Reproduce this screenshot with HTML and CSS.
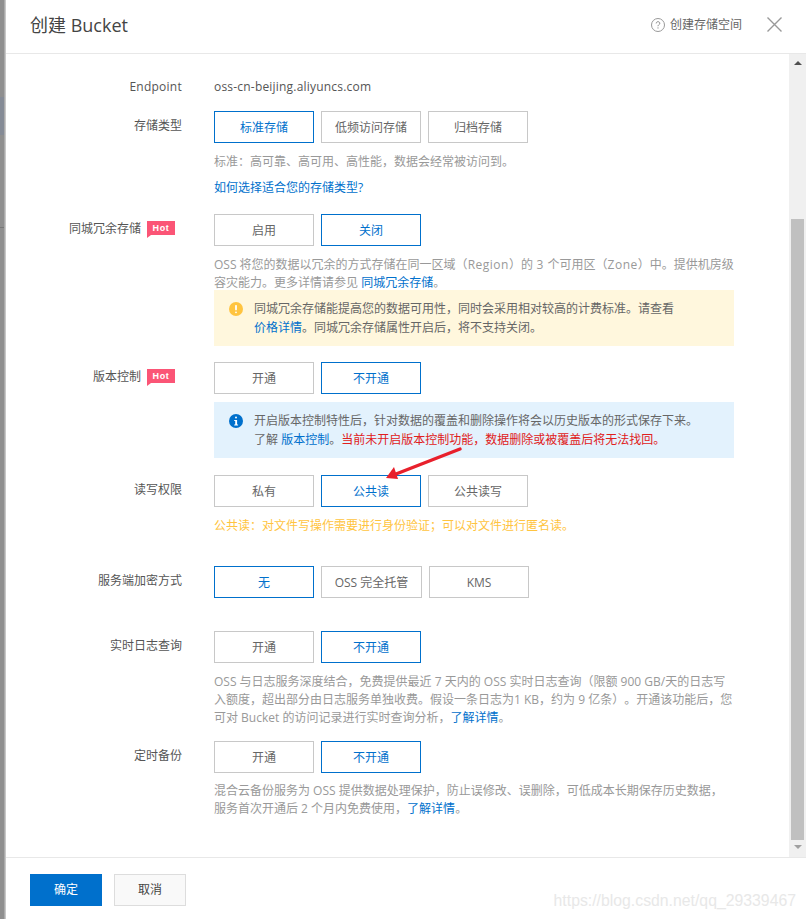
FILE: index.html
```html
<!DOCTYPE html>
<html lang="zh">
<head>
<meta charset="utf-8">
<title>创建 Bucket</title>
<link rel="stylesheet" href="styles.css">
</head>
<body>
<div class="strip"></div>
<div class="dialog">
  <header class="head">
    <h1 class="title">创建 Bucket</h1>
    <a class="help">
      <svg class="help-icon" width="14" height="14" viewBox="0 0 14 14"><circle cx="7" cy="7" r="6.5" fill="none" stroke="#999"/><path d="M5.2 5.4c0-1 .8-1.7 1.8-1.7s1.8.7 1.8 1.6c0 1.3-1.8 1.4-1.8 2.9" fill="none" stroke="#888"/><rect x="6.5" y="9.4" width="1" height="1.1" fill="#888"/></svg>
      创建存储空间
    </a>
    <svg class="close" width="15" height="15" viewBox="0 0 15 15"><path d="M.5.5l14 14M14.5.5l-14 14" stroke="#999" stroke-width="1.4" fill="none"/></svg>
  </header>
  <div class="middle">
    <main class="form">
      <div class="row row-endpoint">
        <div class="label label-flat">Endpoint</div>
        <div class="value">oss-cn-beijing.aliyuncs.com</div>
      </div>
      <div class="row gap-15">
        <div class="label">存储类型</div>
        <div>
          <div class="tabs"><span class="tab on">标准存储</span><span class="tab">低频访问存储</span><span class="tab">归档存储</span></div>
          <p class="hint mt-10">标准：高可靠、高可用、高性能，数据会经常被访问到。</p>
          <p class="hint mt-8"><a class="link">如何选择适合您的存储类型?</a></p>
        </div>
      </div>
      <div class="row gap-17">
        <div class="label label-hot">同城冗余存储<span class="hot">Hot</span></div>
        <div>
          <div class="tabs"><span class="tab">启用</span><span class="tab on">关闭</span></div>
          <p class="hint mt-10">OSS 将您的数据以冗余的方式存储在同一区域（<span class="latin">Region</span>）的<span class="latin"> 3 </span>个可用区（<span class="latin">Zone</span>）中。提供机房级容灾能力。更多详情请参见 <a class="link">同城冗余存储</a>。</p>
          <div class="notice warn">
            <svg class="notice-icon" width="14" height="14" viewBox="0 0 14 14"><circle cx="7" cy="7" r="7" fill="#ffc440"/><rect x="6.1" y="3" width="1.8" height="5.4" rx=".8" fill="#fff"/><rect x="6.1" y="9.4" width="1.8" height="1.8" rx=".9" fill="#fff"/></svg>
            <div>同城冗余存储能提高您的数据可用性，同时会采用相对较高的计费标准。请查看<br><a class="link">价格详情</a>。同城冗余存储属性开启后，将不支持关闭。</div>
          </div>
        </div>
      </div>
      <div class="row gap-16">
        <div class="label label-hot">版本控制<span class="hot">Hot</span></div>
        <div>
          <div class="tabs"><span class="tab">开通</span><span class="tab on">不开通</span></div>
          <div class="notice info">
            <svg class="notice-icon" width="14" height="14" viewBox="0 0 14 14"><circle cx="7" cy="7" r="7" fill="#0070cc"/><rect x="6" y="2.6" width="2" height="2" rx="1" fill="#fff"/><path d="M5.2 6h2.9v4.4h1v1H5.2v-1h1V7h-1z" fill="#fff"/></svg>
            <div>开启版本控制特性后，针对数据的覆盖和删除操作将会以历史版本的形式保存下来。<br>了解 <a class="link">版本控制</a>。<span class="danger">当前未开启版本控制功能，数据删除或被覆盖后将无法找回。</span></div>
          </div>
        </div>
      </div>
      <div class="row gap-17">
        <div class="label">读写权限</div>
        <div>
          <div class="tabs"><span class="tab">私有</span><span class="tab on">公共读</span><span class="tab">公共读写</span></div>
          <p class="hint hint-warn mt-10">公共读：对文件写操作需要进行身份验证；可以对文件进行匿名读。</p>
        </div>
      </div>
      <div class="row gap-31">
        <div class="label">服务端加密方式</div>
        <div class="tabs"><span class="tab on">无</span><span class="tab tab-wide">OSS 完全托管</span><span class="tab">KMS</span></div>
      </div>
      <div class="row gap-33">
        <div class="label">实时日志查询</div>
        <div>
          <div class="tabs"><span class="tab">开通</span><span class="tab on">不开通</span></div>
          <p class="hint mt-10">OSS 与日志服务深度结合，免费提供最近 7 天内的 OSS 实时日志查询（限额 900 GB/天的日志写入额度，超出部分由日志服务单独收费。假设一条日志为1 KB，约为 9 亿条）。开通该功能后，您可对 Bucket 的访问记录进行实时查询分析，<a class="link">了解详情</a>。</p>
        </div>
      </div>
      <div class="row gap-14">
        <div class="label">定时备份</div>
        <div>
          <div class="tabs"><span class="tab">开通</span><span class="tab on">不开通</span></div>
          <p class="hint mt-9">混合云备份服务为 OSS 提供数据处理保护，防止误修改、误删除，可低成本长期保存历史数据，<br>服务首次开通后 2 个月内免费使用，<a class="link">了解详情</a>。</p>
        </div>
      </div>
    </main>
    <div class="scrollbar">
      <span class="arrow-up"></span>
      <span class="thumb"></span>
      <span class="arrow-down"></span>
    </div>
  </div>
  <footer class="foot">
    <button class="btn primary">确定</button>
    <button class="btn">取消</button>
  </footer>
</div>
<svg class="annotation" width="90" height="40" viewBox="0 0 90 40"><path d="M75 2L11 27" stroke="#e8202c" stroke-width="3.4" stroke-linecap="round" fill="none"/><path d="M1 31L9 20l4 12z" fill="#e8202c"/></svg>
<div class="watermark">https://blog.csdn.net/qq_29339467</div>
</body>
</html>
```
FILE: styles.css
```css
* { box-sizing: border-box; }
html, body { margin: 0; padding: 0; height: 100%; }
body {
  display: flex;
  width: 806px;
  height: 919px;
  overflow: hidden;
  position: relative;
  background: #fff;
  color: #555;
  font: 12px/18px "Open Sans", "Noto Sans CJK SC", sans-serif;
  text-spacing-trim: space-all;
}
.strip {
  width: 6px;
  flex: none;
  background:
    linear-gradient(90deg, transparent 4px, #ababab 4px, #ababab 5px, #c8c8c8 5px),
    linear-gradient(180deg, transparent 97px, #858b96 97px, #858b96 135px, transparent 135px, transparent 227px, #777 227px, #777 228px, transparent 228px),
    #8f8f8f;
}
.dialog { flex: 1; min-width: 0; display: flex; flex-direction: column; }
.head {
  height: 54px;
  flex: none;
  display: flex;
  align-items: center;
  padding: 0 24px 4px 24px;
  border-bottom: 1px solid #e8e8e8;
}
.title { margin: 0; flex: 1; font-size: 18px; font-weight: 400; line-height: 24px; color: #444; }
.help { display: flex; align-items: center; gap: 5px; color: #666; }
.help-icon { flex: none; }
.close { margin-left: 25px; flex: none; }
.middle { flex: 1; min-height: 0; display: flex; }
.form { flex: 1; min-width: 0; padding-top: 24px; }
.row { display: grid; grid-template-columns: 176px 520px; column-gap: 32px; align-items: start; }
.gap-14 { margin-top: 14px; }
.gap-15 { margin-top: 15px; }
.gap-16 { margin-top: 16px; }
.gap-17 { margin-top: 17px; }
.gap-31 { margin-top: 31px; }
.gap-33 { margin-top: 33px; }
.mt-8 { margin-top: 8px; }
.mt-9 { margin-top: 9px; }
.mt-10 { margin-top: 10px; }
.label { padding-top: 6px; text-align: right; color: #555; }
.label-flat { padding-top: 0; letter-spacing: .25px; }
.value { letter-spacing: .2px; }
.latin { letter-spacing: .5px; }
.label-hot { display: flex; justify-content: flex-end; gap: 6px; padding-right: 7px; }
.hot {
  position: relative;
  width: 28px;
  height: 14px;
  margin-top: 1px;
  background: #fb5576;
  color: #fff;
  font: 700 9px/14px "Liberation Sans", sans-serif;
  letter-spacing: .6px;
  text-align: center;
}
.hot::after {
  content: "";
  position: absolute;
  left: 0;
  top: 14px;
  border-top: 3px solid #fb5576;
  border-left: 4px solid transparent;
  transform: scaleX(-1);
}
.tabs { display: flex; gap: 7px; }
.tab {
  width: 100px;
  height: 32px;
  flex: none;
  border: 1px solid #c8c8c8;
  text-align: center;
  line-height: 32px;
  color: #666;
}
.tab-wide { width: 101px; }
.tab.on { border-color: #0070cc; color: #0070cc; }
.hint { margin-bottom: 0; margin-left: 0; margin-right: 0; color: #999; }
.hint-warn { color: #ffc440; }
.link { color: #0070cc; }
.notice { height: 56px; padding: 9px 0 9px 15px; display: flex; gap: 11px; line-height: 19px; color: #666; }
.notice-icon { flex: none; margin-top: 3px; }
.warn { margin-top: -2px; background: #fff7dd; }
.info { margin-top: 8px; background: #e3f2fd; }
.danger { color: #e02020; }
.scrollbar {
  width: 17px;
  flex: none;
  background: #f0f0f0;
  display: flex;
  flex-direction: column;
  align-items: center;
}
.arrow-up { margin-top: 7px; border: 4px solid transparent; border-top: 0; border-bottom: 4px solid #505050; }
.thumb { width: 13px; height: 621px; margin-top: 154px; background: #c0c0c0; }
.arrow-down { margin-top: 5px; border: 4px solid transparent; border-bottom: 0; border-top: 4px solid #a0a0a0; }
.foot {
  height: 62px;
  flex: none;
  display: flex;
  gap: 12px;
  padding: 16px 0 0 24px;
  border-top: 1px solid #e8e8e8;
}
.btn {
  width: 72px;
  height: 32px;
  padding: 0;
  border: 1px solid #ddd;
  background: #f9f9f9;
  color: #444;
  font: inherit;
}
.primary { border-color: #0070cc; background: #0070cc; color: #fff; }
.annotation { position: absolute; left: 385px; top: 447px; }
.watermark {
  position: absolute;
  right: 10px;
  top: 890px;
  font: 15.8px/22px "Liberation Sans", sans-serif;
  color: #e8e8e8;
}
```
